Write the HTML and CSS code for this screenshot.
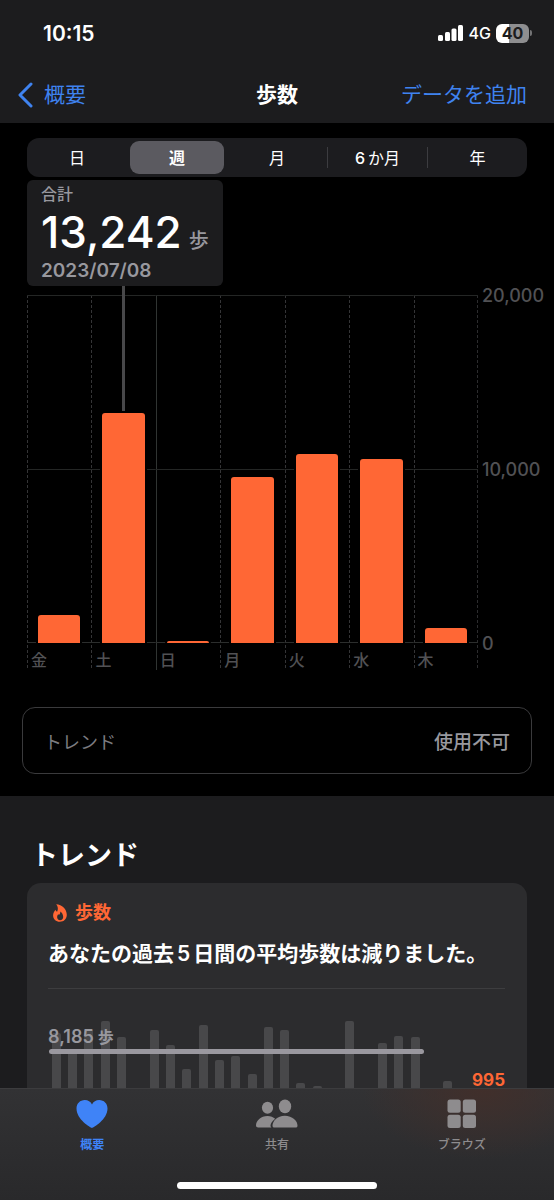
FILE: index.html
```html
<!DOCTYPE html>
<html lang="ja">
<head>
<meta charset="utf-8">
<meta name="viewport" content="width=device-width, initial-scale=1">
<title>歩数</title>
<link rel="stylesheet" href="styles.css">
</head>
<body>
<div class="app">
  <header class="header">
    <div class="status">
      <span class="clock">10:15</span>
      <div class="status-right">
        <svg class="signal" viewBox="0 0 26 16" aria-hidden="true"><rect x="0" y="10" width="5" height="6" rx="1.5"/><rect x="7" y="7" width="5" height="9" rx="1.5"/><rect x="13.500" y="3.500" width="5" height="12.500" rx="1.500"/><rect x="20" y="0" width="5" height="16" rx="1.500"/></svg>
        <span class="network">4G</span>
        <div class="battery-wrap"><span class="battery">40</span><span class="battery-tip"></span></div>
      </div>
    </div>
    <div class="navbar">
      <button class="nav-button back" type="button">
        <svg class="chevron" viewBox="0 0 16 26" aria-hidden="true"><path d="M14 2 3 13l11 11"/></svg>概要
      </button>
      <h1 class="nav-title">歩数</h1>
      <button class="nav-button add" type="button">データを追加</button>
    </div>
  </header>

  <main class="main">
    <section class="summary">
      <div class="segments" role="group" aria-label="期間">
        <button class="segment" type="button">日</button>
        <button class="segment selected" type="button" aria-pressed="true">週</button>
        <button class="segment" type="button">月</button>
        <button class="segment divided" type="button"><span class="segment-num">6</span>か月</button>
        <button class="segment divided" type="button">年</button>
      </div>

      <div class="callout">
        <div class="callout-label">合計</div>
        <div class="callout-value">13,242<span class="callout-unit">歩</span></div>
        <div class="callout-date">2023/07/08</div>
      </div>

      <div class="chart">
        <div class="plot">
          <div class="day"><div class="slot"><div class="bar" style="height:8.1%"></div></div><span class="day-name">金</span></div>
          <div class="day"><div class="slot"><div class="pointer"></div><div class="bar" style="height:66.2%"></div></div><span class="day-name">土</span></div>
          <div class="day week-start"><div class="slot"><div class="bar" style="height:0.5%"></div></div><span class="day-name">日</span></div>
          <div class="day"><div class="slot"><div class="bar" style="height:47.7%"></div></div><span class="day-name">月</span></div>
          <div class="day"><div class="slot"><div class="bar" style="height:54.2%"></div></div><span class="day-name">火</span></div>
          <div class="day"><div class="slot"><div class="bar" style="height:52.9%"></div></div><span class="day-name">水</span></div>
          <div class="day"><div class="slot"><div class="bar" style="height:4.4%"></div></div><span class="day-name">木</span></div>
        </div>
        <div class="axis"><span>20,000</span><span>10,000</span><span>0</span></div>
      </div>

      <button class="trend-row" type="button"><span>トレンド</span><span class="trend-status">使用不可</span></button>
    </section>

    <section class="trends">
      <h2 class="section-title">トレンド</h2>
      <article class="card">
        <div class="card-kind">
          <svg class="flame" viewBox="0 0 14 18" aria-hidden="true"><path fill-rule="evenodd" d="M3.200.300C9 .500 13.800 5.300 13.800 10.800c0 4.200-2.900 7-6.900 7S.100 15.200.100 11.500c0-2.700 1.300-4.300 2.300-5.800.400 1 .900 1.600 1.700 2C5.400 5.400 5.100 2.600 3.200.300ZM7.300 7.500c.200 1.900-.700 2.800-1.400 3.500-.300-.200-.500-.500-.600-.900-.700.900-1.200 1.900-1.200 3 0 1.900 1.200 3.100 3 3.100s3.100-1.200 3.100-3.200c0-2.200-1.200-4.300-2.900-5.500Z"/></svg>
          歩数
        </div>
        <h3 class="card-title">あなたの過去<span class="num">5</span>日間の平均歩数は減りました。</h3>
        <div class="history">
          <i style="height:158px"></i><i style="height:140px"></i><i style="height:162px"></i><i style="height:170px"></i><i style="height:154px"></i><i></i><i style="height:161px"></i>
          <i style="height:146px"></i><i style="height:122px"></i><i style="height:166px"></i><i style="height:131px"></i><i style="height:135px"></i><i style="height:117px"></i><i style="height:164px"></i>
          <i style="height:161px"></i><i style="height:108px"></i><i style="height:105px"></i><i></i><i style="height:170px"></i><i></i><i style="height:148px"></i>
          <i style="height:155px"></i><i style="height:154px"></i><i></i><i style="height:110px"></i><i></i><i></i><i></i>
          <span class="average">8,185<span class="average-unit">歩</span></span>
          <span class="average-line"></span>
          <span class="recent">995</span>
        </div>
      </article>
    </section>
  </main>

  <nav class="tabbar">
    <div class="tabs">
      <a class="tab active" href="#">
        <svg class="tab-icon" viewBox="0 0 32 30" aria-hidden="true"><path d="M16 29C14.500 28.600.500 20.500.500 9.500.500 4.500 4.200 1 8.700 1 12 1 14.700 2.700 16 5.400 17.300 2.700 20 1 23.300 1c4.500 0 8.200 3.500 8.200 8.500C31.500 20.500 17.500 28.600 16 29Z"/></svg>
        概要
      </a>
      <a class="tab" href="#">
        <svg class="tab-icon wide" viewBox="0 0 44 30" aria-hidden="true"><ellipse cx="12.500" cy="8.800" rx="5.600" ry="6"/><path d="M16.400 28.500H3.200C1.900 28.500 1 27.800 1 26.500c0-4.500 4.800-9.500 11.500-9.500 3.200 0 5.800 1.100 7.700 2.800-2.900 2.200-4.700 5-4.700 7 0 .700.400 1.300.900 1.700Z"/><ellipse cx="30" cy="7.400" rx="6.200" ry="6.800"/><path d="M19.300 28.500c-1.100 0-1.800-.700-1.800-1.800 0-4.600 4.700-9.900 12.300-9.900S42.500 22 42.500 26.700c0 1.100-.700 1.800-1.800 1.800Z"/></svg>
        共有
      </a>
      <a class="tab" href="#">
        <svg class="tab-icon" viewBox="0 0 32 30" aria-hidden="true"><rect x="1.500" y="0.500" width="13.200" height="13.200" rx="2.500"/><rect x="16.800" y=".5" width="13.200" height="13.200" rx="2.500"/><rect x="1.500" y="15.800" width="13.200" height="13.200" rx="2.500"/><rect x="16.800" y="15.800" width="13.200" height="13.200" rx="2.500"/></svg>
        ブラウズ
      </a>
    </div>
    <div class="home-indicator"></div>
  </nav>
</div>
</body>
</html>
```

FILE: styles.css
```css
* { box-sizing: border-box; }

body {
  margin: 0;
  background: #1c1c1e;
  color: #fff;
  font-family: Inter, "Noto Sans CJK JP", sans-serif;
}

h1, h2, h3 { margin: 0; }

button {
  margin: 0;
  padding: 0;
  border: 0;
  background: none;
  color: inherit;
  font: inherit;
}

.app {
  display: flex;
  flex-direction: column;
  height: 100vh;
}

/* Header */
.header { flex: none; }

.status {
  display: flex;
  justify-content: space-between;
  align-items: center;
  height: 66px;
  padding: 0 22px 0 43px;
}

.clock {
  font-size: 21px;
  font-weight: 600;
}

.status-right {
  display: flex;
  align-items: center;
  gap: 5px;
}

.signal {
  width: 26px;
  height: 16px;
  fill: #fff;
}

.network {
  font-size: 16px;
  font-weight: 500;
}

.battery-wrap {
  display: flex;
  align-items: center;
  gap: 1px;
}

.battery {
  width: 33px;
  border-radius: 6px;
  background: linear-gradient(90deg, #fff 40%, #8e8e90 40%);
  color: #1c1c1e;
  font-size: 16px;
  font-weight: 700;
  line-height: 19px;
  text-align: center;
}

.battery-tip {
  width: 2px;
  height: 6px;
  border-radius: 0 2px 2px 0;
  background: #737375;
}

.navbar {
  display: grid;
  grid-template-columns: 1fr auto 1fr;
  align-items: center;
  height: 57px;
  padding: 0 27px;
}

.nav-button {
  color: #3f83f0;
  font-size: 21px;
  line-height: 30px;
}

.back {
  display: flex;
  align-items: center;
  gap: 11px;
  justify-self: start;
  margin-left: -10px;
}

.chevron {
  width: 16px;
  height: 26px;
  fill: none;
  stroke: #3f83f0;
  stroke-width: 3;
  stroke-linecap: round;
  stroke-linejoin: round;
}

.nav-title {
  font-size: 21px;
  font-weight: 700;
  line-height: 30px;
}

.add { justify-self: end; }

/* Main column */
.main {
  display: flex;
  flex: 1;
  flex-direction: column;
  min-height: 0;
  overflow: hidden;
}

.summary {
  flex: none;
  padding: 15px 0 22px;
  background: #000;
}

.segments {
  display: grid;
  grid-template-columns: repeat(5, 1fr);
  height: 39px;
  margin: 0 27px 3px;
  border-radius: 12px;
  background: #1c1c1f;
}

.segment {
  font-size: 16px;
  line-height: 20px;
}

.segment-num {
  margin-right: 3px;
  font-weight: 500;
}

.segment.selected {
  margin: 3px;
  border-radius: 9px;
  background: #5b5a60;
  font-weight: 700;
}

.segment.divided {
  margin: 9px 0;
  border-left: 1px solid #3c3c40;
}

.callout {
  width: max-content;
  margin-left: 27px;
  padding: 3px 14px;
  border-radius: 6px;
  background: #1c1c1e;
  color: #98989e;
}

.callout-label {
  font-size: 16px;
  font-weight: 500;
  line-height: 22px;
}

.callout-value {
  color: #fff;
  font-size: 44px;
  font-weight: 500;
  line-height: 54px;
}

.callout-unit {
  margin-left: 7px;
  color: #98989e;
  font-size: 20px;
  line-height: 20px;
}

.callout-date {
  font-size: 19px;
  font-weight: 600;
  line-height: 24px;
}

/* Weekly chart */
.chart {
  display: flex;
  margin-top: 9px;
  padding-left: 27px;
}

.plot {
  display: grid;
  flex: 1;
  grid-template-columns: repeat(7, 1fr);
  background: repeating-linear-gradient(#2c2c2e 0 3px, transparent 3px 5px) right / 1px 100% no-repeat;
}

.day { background: repeating-linear-gradient(#343436 0 3px, transparent 3px 5px) left / 1px 100% no-repeat; }

.week-start { background: linear-gradient(#303432, #303432) left / 1px 100% no-repeat; }

.slot {
  display: flex;
  flex-direction: column;
  align-items: center;
  justify-content: flex-end;
  height: 348px;
  background:
    linear-gradient(#242625, #242625) top / 100% 1px no-repeat,
    linear-gradient(#242625, #242625) center / 100% 1px no-repeat,
    linear-gradient(#2c2e2d, #2c2e2d) bottom / 100% 1px no-repeat;
}

.bar {
  flex: none;
  width: 66%;
  min-height: 2px;
  border-radius: 3px 3px 0 0;
  background: #ff6735;
  box-shadow: -2px 0 #000, 2px 0 #000;
}

.pointer {
  flex: 1;
  width: 3px;
  margin: -9px 0 2px;
  background: #48484a;
}

.day-name {
  display: block;
  padding: 7px 0 0 4px;
  color: #515154;
  font-size: 16px;
  font-weight: 500;
  line-height: 20px;
}

.axis {
  display: flex;
  flex-direction: column;
  justify-content: space-between;
  width: 76px;
  height: 368px;
  margin-top: -9px;
  padding-left: 4px;
  color: #515154;
  font-size: 18px;
  font-weight: 500;
  line-height: 20px;
}

.trend-row {
  display: flex;
  align-items: center;
  justify-content: space-between;
  width: calc(100% - 44px);
  height: 67px;
  margin: 37px 22px 0;
  padding: 0 21px;
  border: 1px solid #3a3a3c;
  border-radius: 13px;
  color: #7c7c80;
  font-size: 18px;
}

.trend-status {
  color: #98989e;
  font-size: 19px;
  font-weight: 500;
}

/* Trend card */
.trends {
  flex: 1;
  min-height: 0;
  padding: 42px 27px 0;
  overflow: hidden;
}

.section-title {
  margin-bottom: 9px;
  padding-left: 4px;
  font-size: 27px;
  font-weight: 700;
  line-height: 36px;
}

.card {
  padding: 17px 22px 0 21px;
  border-radius: 14px;
  background: #2c2c2e;
}

.card-kind {
  display: flex;
  align-items: center;
  gap: 8px;
  padding-left: 5px;
  color: #ff6735;
  font-size: 18px;
  font-weight: 700;
  line-height: 26px;
}

.flame {
  width: 14px;
  height: 18px;
  fill: #ff6735;
}

.card-title {
  padding: 13px 0 19px;
  border-bottom: 1px solid #3d3d3f;
  font-size: 21px;
  font-weight: 600;
  line-height: 30px;
  white-space: nowrap;
}

.num { margin: 0 3px; }

.history {
  position: relative;
  display: grid;
  grid-template-columns: repeat(28, 1fr);
  align-items: end;
  justify-items: center;
  height: 170px;
  margin: 32px 0 20px;
}

.history i {
  width: 9px;
  border-radius: 2px 2px 0 0;
  background: #48484a;
}

.average {
  position: absolute;
  top: 4px;
  left: 0;
  color: #98989e;
  font-size: 18px;
  font-weight: 600;
  line-height: 24px;
}

.average-unit {
  margin-left: 4px;
  font-size: 16px;
}

.average-line {
  position: absolute;
  top: 28px;
  left: 1px;
  width: 82%;
  height: 5px;
  border-radius: 3px;
  background: #9a989f;
}

.recent {
  position: absolute;
  top: 50px;
  right: 0;
  color: #ff6735;
  font-size: 17px;
  font-weight: 700;
  line-height: 18px;
}

/* Tab bar */
.tabbar {
  display: flex;
  flex: none;
  flex-direction: column;
  justify-content: space-between;
  height: 112px;
  padding: 10px 0 11px;
  border-top: 1px solid #3c3c3e;
  background:
    radial-gradient(ellipse 120px 70px at 87% 0, #412f2b, transparent),
    linear-gradient(#323234, #29292b);
}

.tabs {
  display: grid;
  grid-template-columns: repeat(3, 1fr);
}

.tab {
  display: flex;
  flex-direction: column;
  align-items: center;
  gap: 7px;
  color: #8e8c8e;
  font-size: 12px;
  font-weight: 500;
  line-height: 18px;
  text-decoration: none;
}

.tab.active {
  color: #3f83f7;
  font-weight: 700;
}

.tab-icon {
  width: 32px;
  height: 30px;
  fill: currentColor;
}

.tab-icon.wide { width: 44px; }

.home-indicator {
  align-self: center;
  width: 36%;
  height: 7px;
  border-radius: 4px;
  background: #fff;
}
```
